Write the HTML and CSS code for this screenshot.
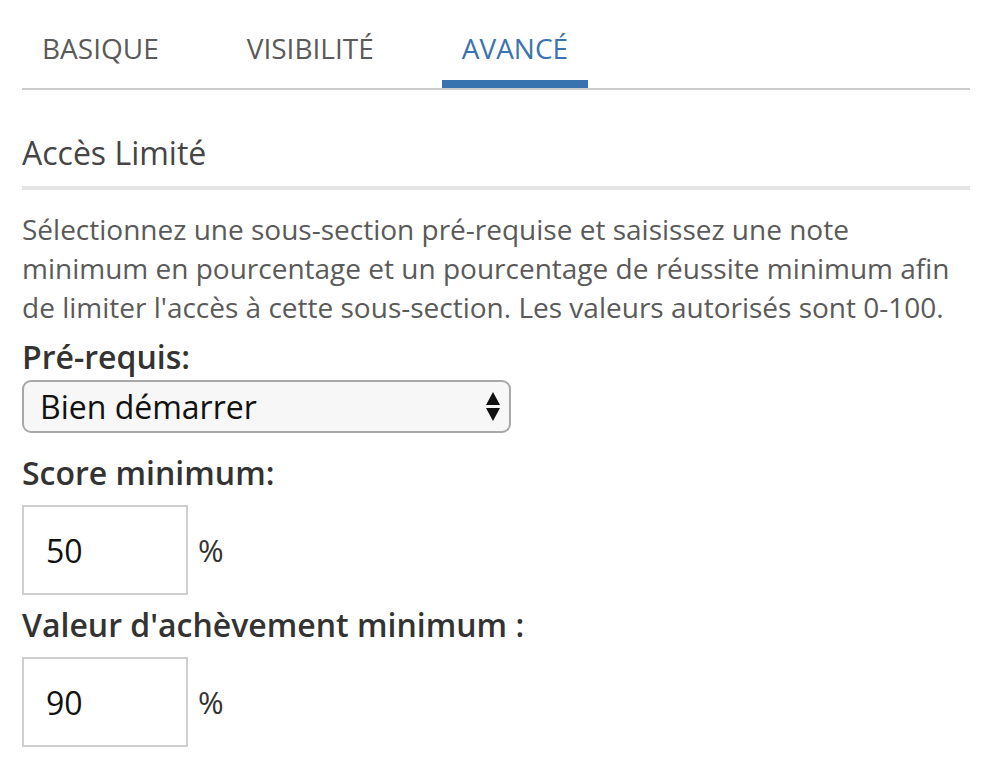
FILE: index.html
```html
<!DOCTYPE html>
<html lang="fr">
<head>
<meta charset="utf-8">
<title>Accès Limité</title>
<link rel="stylesheet" href="styles.css">
</head>
<body>
<div class="page">
  <nav class="tabs">
    <a class="tab">BASIQUE</a>
    <a class="tab">VISIBILITÉ</a>
    <a class="tab active">AVANCÉ</a>
  </nav>
  <h2 class="section-title">Accès Limité</h2>
  <p class="desc">Sélectionnez une sous-section pré-requise et saisissez une note minimum en pourcentage et un pourcentage de réussite minimum afin de limiter l'accès à cette sous-section. Les valeurs autorisés sont 0-100.</p>
  <label class="label label-prereq" for="prereq">Pré-requis:</label>
  <div class="select-wrap">
    <select id="prereq" class="select">
      <option>Bien démarrer</option>
    </select>
    <svg class="select-arrows" width="14" height="29" viewBox="0 0 14 29"><path d="M7 0 L14 13 L0 13 Z" fill="#111"/><path d="M0 16 L14 16 L7 29 Z" fill="#111"/></svg>
  </div>
  <label class="label label-score" for="score">Score minimum:</label>
  <div class="input-row">
    <input id="score" class="num" type="text" value="50">
    <span class="unit">%</span>
  </div>
  <label class="label label-completion" for="completion">Valeur d'achèvement minimum :</label>
  <div class="input-row">
    <input id="completion" class="num" type="text" value="90">
    <span class="unit">%</span>
  </div>
</div>
</body>
</html>
```

FILE: styles.css
```css
html, body {
  margin: 0;
  padding: 0;
  background: #ffffff;
}
body {
  font-family: "Open Sans", "DejaVu Sans", sans-serif;
}
.page {
  margin-left: 22px;
  width: 948px;
  padding-top: 30px;
}
.tabs {
  display: flex;
  gap: 48px;
  border-bottom: 2px solid #cccccc;
}
.tab {
  font-size: 28px;
  line-height: 37px;
  color: #5a5a5a;
  padding: 0 20px 13px;
  border-bottom: 8px solid transparent;
}
.tab.active {
  color: #3a74b0;
  border-bottom-color: #3872af;
}
.section-title {
  margin: 42px 0 0;
  font-size: 32px;
  line-height: 42px;
  font-weight: 400;
  color: #454545;
  padding-bottom: 12px;
  border-bottom: 4px solid #e5e5e5;
}
.desc {
  margin: 20px 0 0;
  font-size: 28px;
  line-height: 39px;
  color: #5a5a5a;
}
.label {
  display: block;
  font-size: 32px;
  line-height: 40px;
  font-weight: 600;
  color: #333333;
}
.label-prereq {
  margin-top: 10px;
}
.select-wrap {
  position: relative;
  margin-top: 3px;
  width: 489px;
}
.select {
  appearance: none;
  -webkit-appearance: none;
  display: block;
  width: 489px;
  height: 53px;
  box-sizing: border-box;
  border: 2px solid #a8a8a8;
  border-radius: 9px;
  background: #f7f7f7;
  font-family: "Open Sans", "DejaVu Sans", sans-serif;
  font-size: 32px;
  color: #111111;
  padding: 0 16px;
  margin: 0;
}
.select-arrows {
  position: absolute;
  right: 11px;
  top: 12px;
}
.label-score {
  margin-top: 20px;
}
.label-completion {
  margin-top: 10px;
}
.input-row {
  display: flex;
  align-items: center;
  gap: 10px;
  margin-top: 12px;
}
.num {
  width: 166px;
  height: 90px;
  box-sizing: border-box;
  border: 2px solid #cfcfcf;
  padding: 0 22px;
  margin: 0;
  font-family: "Open Sans", "DejaVu Sans", sans-serif;
  font-size: 32px;
  color: #111111;
  background: #ffffff;
}
.unit {
  font-size: 31px;
  color: #333333;
}
```
